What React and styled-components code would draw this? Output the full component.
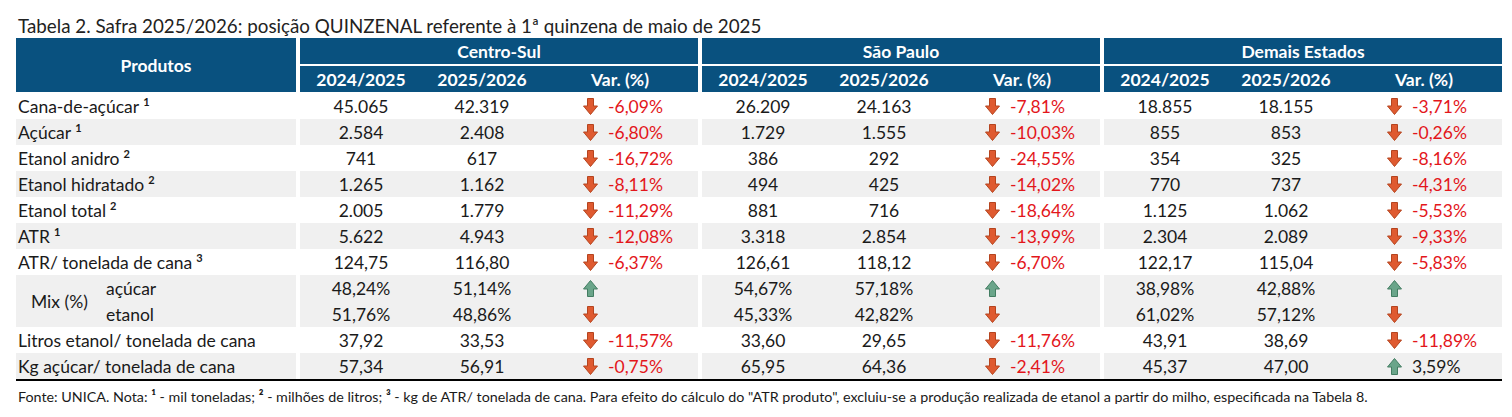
import React from 'react';
import styled, { createGlobalStyle } from 'styled-components';

const GlobalStyle = createGlobalStyle`
  html, body {
    margin: 0;
    padding: 0;
    background: #fff;
  }
  body {
    font-family: Lato, "Open Sans", sans-serif;
    color: #1a1a1a;
  }
`;

const Page = styled.div`
  padding: 14px 0 0 16px;
  width: 1486px;
`;

const Title = styled.div`
  height: 24px;
  line-height: 24px;
  padding-left: 2px;
  font-size: 18.8px;
  color: #222;
  white-space: nowrap;
`;

const Table = styled.div`
  border-bottom: 2px solid #000;
`;

const Row = styled.div`
  display: grid;
  grid-template-columns: 280px repeat(3, 398px);
  column-gap: 4px;
  height: ${(p) => p.$h || 26}px;
`;

const HeadRow = styled(Row)`
  height: 54px;
  margin-bottom: 1px;
`;

const HeadCell = styled.div`
  background: #09517f;
  color: #fff;
  font-weight: 700;
  font-size: 17.5px;
  display: flex;
  align-items: center;
  justify-content: center;
`;

const HeadGroup = styled.div`
  display: grid;
  grid-template-rows: 26px 26px;
  row-gap: 2px;
`;

const HeadSub = styled.div`
  display: grid;
  grid-template-columns: 122px 120px 1fr;
  background: #09517f;
`;

const HeadSubCell = styled(HeadCell)`
  background: transparent;
`;

const Cell = styled.div`
  background: ${(p) => (p.$shade ? '#f0f0f0' : '#fff')};
  font-size: 17.5px;
  display: flex;
  align-items: center;
`;

const LabelCell = styled(Cell)`
  padding-left: 2px;
  white-space: nowrap;
`;

const Sup = styled.sup`
  font-size: 11px;
  font-weight: 700;
  margin-left: 4px;
  vertical-align: 7px;
  line-height: 0;
`;

const Group = styled(Cell)`
  display: grid;
  grid-template-columns: 122px 120px 1fr;
  grid-auto-rows: 26px;
  align-items: center;
`;

const Num = styled.div`
  text-align: center;
`;

const Var = styled.div`
  display: flex;
  align-items: center;
  padding-left: 41px;
  gap: 10px;
  color: ${(p) => (p.$down ? '#e3161b' : '#1a1a1a')};
`;

const MixLabel = styled(Cell)`
  display: grid;
  grid-template-columns: 75px auto;
  align-items: center;
  padding-left: 15px;
`;

const MixSubs = styled.div`
  display: grid;
  grid-template-rows: 26px 26px;
  align-items: center;
`;

const Footer = styled.div`
  font-size: 14.3px;
  padding: 7px 0 0 2px;
  color: #1a1a1a;
  white-space: nowrap;
`;

const Arrow = ({ down }) =>
  down ? (
    <svg width="15" height="17" viewBox="0 0 15 17">
      <path
        d="M4.5 0.5 H10.5 V8 H14.5 L7.5 16.5 L0.5 8 H4.5 Z"
        fill="#df5a30"
        stroke="#b5441f"
        strokeWidth="1"
        strokeLinejoin="round"
      />
    </svg>
  ) : (
    <svg width="15" height="17" viewBox="0 0 15 17">
      <path
        d="M4.5 16.5 H10.5 V9 H14.5 L7.5 0.5 L0.5 9 H4.5 Z"
        fill="#6aa58a"
        stroke="#437d62"
        strokeWidth="1"
        strokeLinejoin="round"
      />
    </svg>
  );

const rows = [
  { label: 'Cana-de-açúcar', sup: '1', g: [['45.065', '42.319', '-6,09%'], ['26.209', '24.163', '-7,81%'], ['18.855', '18.155', '-3,71%']] },
  { label: 'Açúcar', sup: '1', g: [['2.584', '2.408', '-6,80%'], ['1.729', '1.555', '-10,03%'], ['855', '853', '-0,26%']] },
  { label: 'Etanol anidro', sup: '2', g: [['741', '617', '-16,72%'], ['386', '292', '-24,55%'], ['354', '325', '-8,16%']] },
  { label: 'Etanol hidratado', sup: '2', g: [['1.265', '1.162', '-8,11%'], ['494', '425', '-14,02%'], ['770', '737', '-4,31%']] },
  { label: 'Etanol total', sup: '2', g: [['2.005', '1.779', '-11,29%'], ['881', '716', '-18,64%'], ['1.125', '1.062', '-5,53%']] },
  { label: 'ATR', sup: '1', g: [['5.622', '4.943', '-12,08%'], ['3.318', '2.854', '-13,99%'], ['2.304', '2.089', '-9,33%']] },
  { label: 'ATR/ tonelada de cana', sup: '3', g: [['124,75', '116,80', '-6,37%'], ['126,61', '118,12', '-6,70%'], ['122,17', '115,04', '-5,83%']] },
];

const mix = [
  [['48,24%', '51,14%', false], ['51,76%', '48,86%', true]],
  [['54,67%', '57,18%', false], ['45,33%', '42,82%', true]],
  [['38,98%', '42,88%', false], ['61,02%', '57,12%', true]],
];

const tail = [
  { label: 'Litros etanol/ tonelada de cana', g: [['37,92', '33,53', '-11,57%'], ['33,60', '29,65', '-11,76%'], ['43,91', '38,69', '-11,89%']] },
  { label: 'Kg açúcar/ tonelada de cana', g: [['57,34', '56,91', '-0,75%'], ['65,95', '64,36', '-2,41%'], ['45,37', '47,00', '3,59%']] },
];

const groups = ['Centro-Sul', 'São Paulo', 'Demais Estados'];

const VarCell = ({ value }) => {
  const down = value.startsWith('-');
  return (
    <Var $down={down}>
      <Arrow down={down} />
      {value}
    </Var>
  );
};

const DataRow = ({ row, shade }) => (
  <Row>
    <LabelCell $shade={shade}>
      <span>
        {row.label}
        {row.sup && <Sup>{row.sup}</Sup>}
      </span>
    </LabelCell>
    {row.g.map((v, i) => (
      <Group key={i} $shade={shade}>
        <Num>{v[0]}</Num>
        <Num>{v[1]}</Num>
        <VarCell value={v[2]} />
      </Group>
    ))}
  </Row>
);

export default function App() {
  return (
    <Page>
      <GlobalStyle />
      <Title>Tabela 2. Safra 2025/2026: posição QUINZENAL referente à 1ª quinzena de maio de 2025</Title>
      <Table>
        <HeadRow>
          <HeadCell>Produtos</HeadCell>
          {groups.map((g) => (
            <HeadGroup key={g}>
              <HeadCell>{g}</HeadCell>
              <HeadSub>
                <HeadSubCell>2024/2025</HeadSubCell>
                <HeadSubCell>2025/2026</HeadSubCell>
                <HeadSubCell>Var. (%)</HeadSubCell>
              </HeadSub>
            </HeadGroup>
          ))}
        </HeadRow>
        {rows.map((r, i) => (
          <DataRow key={r.label} row={r} shade={i % 2 === 1} />
        ))}
        <Row $h={52}>
          <MixLabel $shade>
            <span>Mix (%)</span>
            <MixSubs>
              <div>açúcar</div>
              <div>etanol</div>
            </MixSubs>
          </MixLabel>
          {mix.map((m, i) => (
            <Group key={i} $shade>
              {m.map((s, j) => (
                <React.Fragment key={j}>
                  <Num>{s[0]}</Num>
                  <Num>{s[1]}</Num>
                  <Var>
                    <Arrow down={s[2]} />
                  </Var>
                </React.Fragment>
              ))}
            </Group>
          ))}
        </Row>
        {tail.map((r, i) => (
          <DataRow key={r.label} row={r} shade={i === 1} />
        ))}
      </Table>
      <Footer>
        Fonte: UNICA. Nota: <b>¹</b> - mil toneladas; <b>²</b> - milhões de litros; <b>³</b> - kg de ATR/ tonelada de cana. Para efeito do cálculo do "ATR produto", excluiu-se a produção realizada de etanol a partir do milho, especificada na Tabela 8.
      </Footer>
    </Page>
  );
}
